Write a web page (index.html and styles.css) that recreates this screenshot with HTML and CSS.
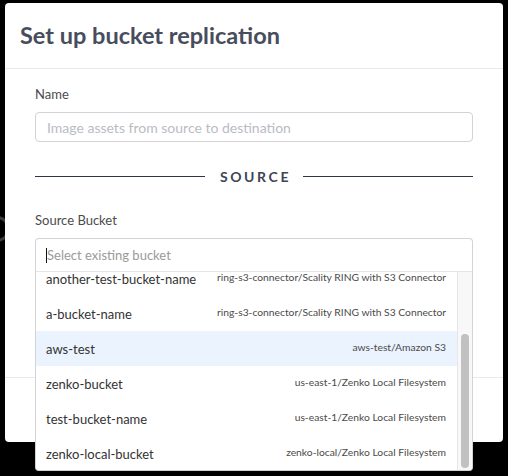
FILE: index.html
```html
<!DOCTYPE html>
<html lang="en">
<head>
<meta charset="utf-8">
<title>Set up bucket replication</title>
<link rel="stylesheet" href="styles.css">
</head>
<body>
<div class="bg-ring"></div>
<div class="modal">
  <div class="modal-header">
    <h1 class="modal-title">Set up bucket replication</h1>
  </div>
  <div class="modal-body">
    <label class="field-label">Name</label>
    <div class="text-input"><span class="placeholder">Image assets from source to destination</span></div>
    <div class="section-divider">
      <span class="divider-line"></span>
      <span class="divider-text">SOURCE</span>
      <span class="divider-line"></span>
    </div>
    <label class="field-label label-source">Source Bucket</label>
    <div class="select">
      <div class="select-control"><span class="caret"></span><span class="select-placeholder">Select existing bucket</span></div>
      <div class="select-menu">
        <div class="menu-list">
          <div class="menu-inner">
            <div class="option"><span class="opt-name">another-test-bucket-name</span><span class="opt-loc">ring-s3-connector/Scality RING with S3 Connector</span></div>
            <div class="option"><span class="opt-name">a-bucket-name</span><span class="opt-loc">ring-s3-connector/Scality RING with S3 Connector</span></div>
            <div class="option option-focused"><span class="opt-name">aws-test</span><span class="opt-loc">aws-test/Amazon S3</span></div>
            <div class="option"><span class="opt-name">zenko-bucket</span><span class="opt-loc">us-east-1/Zenko Local Filesystem</span></div>
            <div class="option"><span class="opt-name">test-bucket-name</span><span class="opt-loc">us-east-1/Zenko Local Filesystem</span></div>
            <div class="option"><span class="opt-name">zenko-local-bucket</span><span class="opt-loc">zenko-local/Zenko Local Filesystem</span></div>
          </div>
        </div>
        <div class="scrollbar"><div class="scroll-thumb"></div></div>
      </div>
    </div>
  </div>
  <div class="modal-footer"></div>
</div>
</body>
</html>
```
FILE: styles.css
```css
html, body {
  margin: 0;
  padding: 0;
}
body {
  width: 508px;
  height: 476px;
  background: #000;
  overflow: hidden;
  position: relative;
  font-family: "Lato", "Noto Sans", sans-serif;
}
.bg-ring {
  position: absolute;
  left: -16px;
  top: 216px;
  width: 20px;
  height: 20px;
  border: 3px solid #3a3a3a;
  border-radius: 50%;
}
.modal {
  position: relative;
  margin: 3px 5px 0;
  width: 498px;
  height: 439px;
  background: #fff;
  border-radius: 4px;
  display: flex;
  flex-direction: column;
}
.modal-header {
  height: 65px;
  border-bottom: 1px solid #e9e9ec;
  display: flex;
  align-items: center;
  padding-left: 15px;
}
.modal-title {
  margin: 0;
  font-size: 23.5px;
  font-weight: 700;
  color: #474d5c;
  padding-bottom: 2px;
  white-space: nowrap;
}
.modal-body {
  height: 308px;
  padding: 17px 30px 0;
  box-sizing: border-box;
  display: flex;
  flex-direction: column;
}
.field-label {
  display: block;
  font-size: 13px;
  line-height: 16px;
  color: #4b4b4b;
  margin-bottom: 10px;
}
.text-input {
  height: 30px;
  box-sizing: border-box;
  border: 1px solid #d3d3d6;
  border-radius: 4px;
  display: flex;
  align-items: center;
  padding-left: 11px;
}
.placeholder {
  font-size: 14px;
  color: #b9bcc4;
  white-space: nowrap;
}
.section-divider {
  margin-top: 24px;
  height: 20px;
  display: flex;
  align-items: center;
  gap: 15px;
}
.divider-line {
  flex: 1;
  height: 1px;
  background: #2f3645;
}
.divider-text {
  font-size: 14px;
  font-weight: 700;
  letter-spacing: 2.6px;
  color: #3e4554;
  margin-right: -3px;
}
.label-source {
  margin-top: 26px;
}
.select {
  position: relative;
}
.select-control {
  height: 34px;
  box-sizing: border-box;
  border: 1px solid #d3d3d6;
  border-bottom-color: #e4e4e6;
  border-radius: 4px 4px 0 0;
  display: flex;
  align-items: center;
  padding-left: 10px;
}
.caret {
  display: inline-block;
  width: 1px;
  height: 15px;
  background: #111;
}
.select-placeholder {
  font-size: 13px;
  color: #9a9a9a;
  white-space: nowrap;
}
.select-menu {
  position: absolute;
  left: 0;
  right: 0;
  top: 34px;
  height: 199px;
  box-sizing: border-box;
  background: #fff;
  border: 1px solid #d3d3d6;
  border-top: none;
  border-radius: 0 0 4px 4px;
  display: flex;
  z-index: 2;
}
.menu-list {
  flex: 1;
  overflow: hidden;
}
.menu-inner {
  margin-top: -11px;
}
.option {
  height: 35px;
  display: flex;
  align-items: center;
  justify-content: space-between;
  padding: 0 11px 0 10px;
  white-space: nowrap;
}
.option-focused {
  background: #ebf3fe;
}
.opt-name {
  font-size: 13px;
  color: #333;
}
.opt-loc {
  font-size: 10.3px;
  color: #4a4a4a;
  padding-bottom: 3px;
}
.scrollbar {
  width: 15px;
  border-left: 1px solid #e6e6e6;
  background: #f8f8f8;
  border-radius: 0 0 4px 0;
  box-sizing: border-box;
  padding: 62px 3px 0 3px;
}
.scroll-thumb {
  height: 134px;
  width: 8px;
  background: #c1c1c1;
  border-radius: 4px;
}
.modal-footer {
  flex: 1;
  border-top: 1px solid #e9e9ec;
}
```
